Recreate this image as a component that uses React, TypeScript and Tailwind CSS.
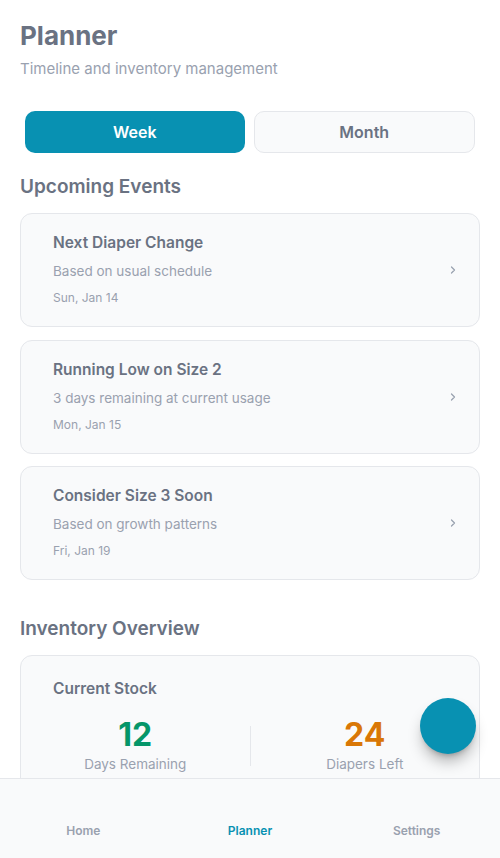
import { ChevronRight } from "lucide-react";

const events = [
    { title: "Next Diaper Change", sub: "Based on usual schedule", date: "Sun, Jan 14" },
    { title: "Running Low on Size 2", sub: "3 days remaining at current usage", date: "Mon, Jan 15" },
    { title: "Consider Size 3 Soon", sub: "Based on growth patterns", date: "Fri, Jan 19" },
];

export default function App() {
    return (
        <div className="min-h-screen bg-white text-gray-500" style={{ fontFamily: "Inter, 'Noto Sans', sans-serif" }}>
            <div className="px-5 pt-5 pb-28">
                <h1 className="text-[26px] leading-8 font-bold text-gray-500">Planner</h1>
                <p className="mt-[7px] text-[15px] leading-5 text-gray-400">Timeline and inventory management</p>

                <div className="mt-[32px] flex gap-[9px] px-[5px]">
                    <button className="flex-1 h-[42px] rounded-[10px] bg-[#0891b2] text-white text-base font-semibold">Week</button>
                    <button className="flex-1 h-[42px] rounded-[10px] bg-gray-50 border border-gray-200 text-gray-500 text-base font-semibold">Month</button>
                </div>

                <h2 className="mt-[22px] text-[19px] leading-6 font-semibold text-gray-500">Upcoming Events</h2>

                <div className="mt-[14px] flex flex-col gap-[12.5px]">
                    {events.map((e) => (
                        <div key={e.title} className="h-[114px] rounded-xl border border-gray-200 bg-gray-50 pl-[32px] pr-[20px] flex items-center">
                            <div className="flex-1 -mt-[1px]">
                                <div className="text-[15.5px] leading-5 font-semibold text-gray-500">{e.title}</div>
                                <div className="mt-[8px] text-[13.5px] leading-5 text-gray-400">{e.sub}</div>
                                <div className="mt-[9px] text-xs leading-4 text-gray-400">{e.date}</div>
                            </div>
                            <ChevronRight className="w-3 h-3 text-gray-400" strokeWidth={2.5} />
                        </div>
                    ))}
                </div>

                <h2 className="mt-[37px] text-[19px] leading-6 font-semibold text-gray-500">Inventory Overview</h2>

                <div className="mt-[14px] rounded-xl border border-gray-200 bg-gray-50 pt-[23px] pb-5">
                    <div className="px-[32px] text-[15.5px] leading-5 font-semibold text-gray-500">Current Stock</div>
                    <div className="mt-[18px] flex items-center">
                        <div className="flex-1 text-center">
                            <div className="text-[32px] leading-9 font-bold text-[#059669]">12</div>
                            <div className="mt-[1px] text-[13.5px] leading-5 text-gray-400">Days Remaining</div>
                        </div>
                        <div className="w-px h-10 bg-gray-200" />
                        <div className="flex-1 text-center">
                            <div className="text-[32px] leading-9 font-bold text-[#d97706]">24</div>
                            <div className="mt-[1px] text-[13.5px] leading-5 text-gray-400">Diapers Left</div>
                        </div>
                    </div>
                </div>
            </div>

            <button className="fixed right-6 bottom-[104px] w-14 h-14 rounded-full bg-[#0891b2] shadow-lg shadow-black/30" />

            <nav className="fixed bottom-0 left-0 right-0 h-20 bg-gray-50 border-t border-gray-200 grid grid-cols-3 items-end pb-[19px]">
                <div className="text-center text-xs font-semibold text-gray-400">Home</div>
                <div className="text-center text-xs font-semibold text-[#0891b2]">Planner</div>
                <div className="text-center text-xs font-semibold text-gray-400">Settings</div>
            </nav>
        </div>
    );
}
